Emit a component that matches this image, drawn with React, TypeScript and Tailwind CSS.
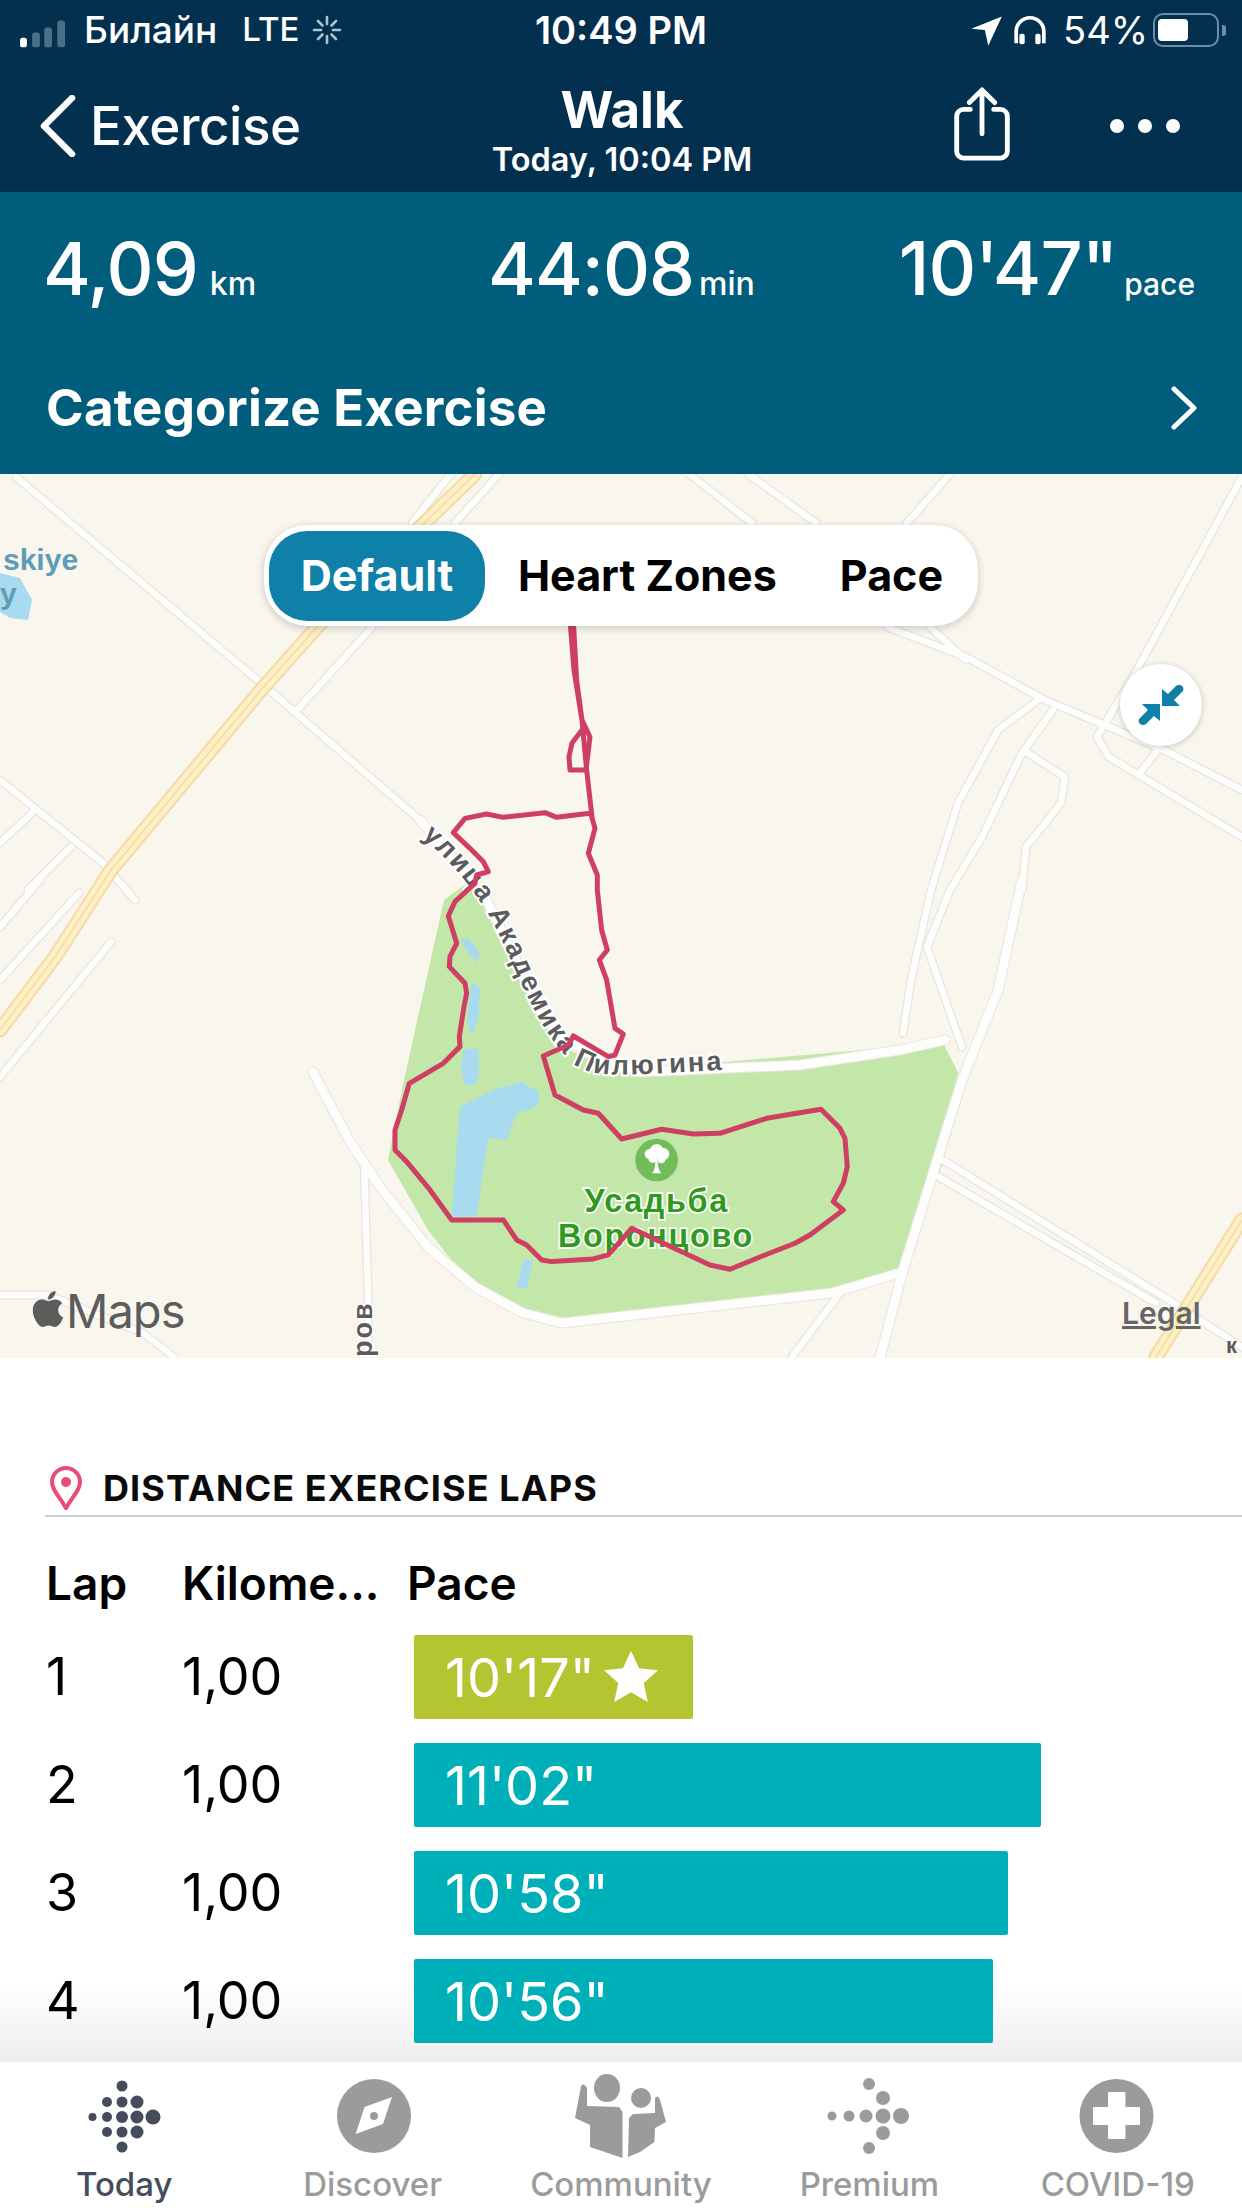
const minorRoads = [
  "M16,477 L261,683 L420,820",
  "M0,780 L103,863 L135,900",
  "M32,813 L0,843",
  "M71,847 L28,890",
  "M40,880 L0,927",
  "M79,893 L0,980",
  "M111,942 L0,1077",
  "M689,474 L752,523",
  "M748,474 L816,523",
  "M950,474 L907,523",
  "M451,474 L412,523",
  "M499,474 L455,523",
  "M372,627 L297,710",
  "M887,627 L966,657 L1045,700 L1164,750 L1242,790",
  "M930,627 L966,660",
  "M1242,477 L1133,677 L1097,737 L1109,757 L1242,837",
  "M1140,773 L1160,747",
  "M1038,700 L998,730 L958,803 L931,890 L911,980 L903,1033",
  "M1053,710 L1022,753 L982,837 L950,890 L927,947 L962,1047",
  "M1026,752 L1065,777 L1061,803 L1026,847 L1022,890",
  "M364,1160 L368,1293 L368,1360",
  "M943,1160 L1164,1297 L1242,1347",
  "M939,1177 L1156,1303",
  "M840,1293 L792,1357",
  "M0,1295 L48,1295 L143,1333 L174,1357",
];

const majorRoads = [
  "M420,820 L483,893 L540,1010 Q570,1055 640,1072 L800,1065 L900,1050 L945,1040",
  "M313,1072 L349,1140 L380,1187 L428,1247 L475,1287 L523,1313 L562,1323 L832,1293 L903,1272",
  "M1022,880 L998,990 L962,1080 L903,1270 L880,1358",
];

const highways = [
  "M475,474 L317,627 L261,690 L111,870 L55,957 L0,1030",
  "M1242,1220 L1156,1357",
];

const route =
  "M640,-480 L650,-300 L666,-180 L680,-30 L696,110 M630,-480 L642,-330 L666,-180 L690,-129 L678,-30 L630,-30 L627,-69 L636,-111 L666,-150 M690,100 L590,112 L555,98 L430,112 L380,102 L315,115 L280,158 L330,205 L370,245 L385,275 L350,285 L345,310 L285,365 L265,408 L290,490 L270,530 L268,560 L315,610 L320,640 L312,680 L298,770 L300,800 L250,850 L148,910 L125,990 L105,1050 L105,1110 L140,1145 L210,1230 L275,1320 L430,1320 L470,1380 L500,1395 L545,1440 L575,1445 L700,1437 L745,1425 L815,1345 L1050,1455 L1110,1468 L1215,1425 L1305,1390 L1350,1365 L1450,1290 L1420,1265 L1450,1210 L1462,1160 L1455,1075 L1440,1045 L1383,988 L1220,1015 L1080,1060 L1000,1062 L905,1048 L785,1077 L715,1000 L670,990 L585,945 L550,828 L625,795 L640,768 L745,830 L765,825 L790,762 L765,745 L740,600 L718,540 L742,510 L725,450 L712,330 L712,285 L685,220 L705,145 L695,110";

function MapLayer() {
  return (
    <svg viewBox="0 474 1242 884" className="block h-full w-full">
      <path d="M467,883 L444,900 L404,1080 L388,1160 L428,1230 L467,1280 L515,1310 L562,1320 L832,1293 L903,1270 L943,1163 L962,1080 L943,1043 L713,1063 L618,1073 L554,1043 L483,893 Z" fill="#c3e7a9" />
      <path d="M0,573 L20,578 L32,600 L28,620 L10,618 L0,612 Z" fill="#a8daf0" />
      <g fill="none" strokeLinecap="round" strokeLinejoin="round">
        {minorRoads.map((d) => (
          <path key={d + "a"} d={d} stroke="#e8e5dd" strokeWidth="9" />
        ))}
        {majorRoads.map((d) => (
          <path key={d + "e"} d={d} stroke="#e8e5dd" strokeWidth="11" />
        ))}
        {minorRoads.map((d) => (
          <path key={d + "b"} d={d} stroke="#fdfdfb" strokeWidth="6.5" />
        ))}
        {majorRoads.map((d) => (
          <path key={d + "f"} d={d} stroke="#fdfdfb" strokeWidth="9" />
        ))}
        {highways.map((d) => (
          <path key={d + "c"} d={d} stroke="#f5d9a4" strokeWidth="15" />
        ))}
        {highways.map((d) => (
          <path key={d + "d"} d={d} stroke="#fdf0c4" strokeWidth="11" />
        ))}
        {highways.map((d) => (
          <path key={d + "g"} d={d} stroke="#f5d9a4" strokeWidth="1.5" />
        ))}
      </g>
      <g transform="translate(360 780) scale(0.3333)">
        <g fill="#a8daf0">
          <path d="M300,980 L400,930 L480,905 L530,930 L540,960 L520,985 L470,1000 L440,1080 L385,1075 L370,1170 L350,1310 L275,1310 L290,1100 Z" />
          <path d="M300,480 L325,475 L360,520 L350,550 L320,510 Z" />
          <path d="M335,610 L360,620 L355,720 L335,765 L320,720 Z" />
          <path d="M310,810 L355,805 L358,880 L345,915 L315,915 L303,860 Z" />
          <path d="M490,1440 L520,1440 L500,1525 L470,1525 Z" />
        </g>
        <path id="street" d="M185,170 C290,260 360,350 410,450 C480,590 530,750 640,850 C700,895 760,888 1120,868" fill="none" />
        <text className="font-['Liberation_Sans',sans-serif] text-[82px] font-bold" fill="#5b5b5b" stroke="#ffffff" strokeWidth="12" paintOrder="stroke" letterSpacing="6">
          <textPath href="#street">улица Академика Пилюгина</textPath>
        </text>
        <circle cx="890" cy="1140" r="64" fill="#72bd5a" />
        <path d="M876,1180 Q888,1170 886,1125 L892,1125 Q892,1170 904,1180 Z" fill="#ffffff" />
        <g fill="#ffffff">
          <circle cx="890" cy="1112" r="20" />
          <circle cx="870" cy="1122" r="16" />
          <circle cx="910" cy="1122" r="18" />
          <circle cx="878" cy="1136" r="12" />
          <circle cx="904" cy="1138" r="12" />
        </g>
        <g className="font-['Liberation_Sans',sans-serif] text-[97px] font-bold" fill="#2f9a1e" stroke="#ffffff" strokeWidth="10" paintOrder="stroke" textAnchor="middle" letterSpacing="5">
          <text x="890" y="1297">Усадьба</text>
          <text x="888" y="1402">Воронцово</text>
        </g>
        <path d={route} fill="none" stroke="#cf3f63" strokeWidth="15" strokeLinejoin="round" strokeLinecap="round" />
      </g>
      <g className="font-['Liberation_Sans',sans-serif] font-bold">
        <text x="3" y="570" fill="#5e9cb8" fontSize="30">skiye</text>
        <text x="0" y="604" fill="#5e9cb8" fontSize="30">y</text>
        <text transform="translate(372 1357) rotate(-90)" fill="#5b5b5b" stroke="#ffffff" strokeWidth="3" paintOrder="stroke" fontSize="27" letterSpacing="2">ров</text>
        <text x="1226" y="1353" fill="#5b5b5b" fontSize="22">к</text>
      </g>
    </svg>
  );
}

function TabIcon({ children, viewBox }: { children: React.ReactNode; viewBox: string }) {
  return (
    <svg viewBox={viewBox} className="h-[92px] w-[100px]">
      {children}
    </svg>
  );
}

const laps = [
  { lap: "1", km: "1,00", pace: "10'17\"", bar: "w-[279px] bg-[#b3c632]", best: true },
  { lap: "2", km: "1,00", pace: "11'02\"", bar: "w-[627px] bg-[#00b0b9]", best: false },
  { lap: "3", km: "1,00", pace: "10'58\"", bar: "w-[594px] bg-[#00b0b9]", best: false },
  { lap: "4", km: "1,00", pace: "10'56\"", bar: "w-[579px] bg-[#00b0b9]", best: false },
];

export default function App() {
  return (
    <div className="flex h-[2208px] w-[1242px] flex-col overflow-hidden bg-white font-[Inter,sans-serif]">
      {/* status bar */}
      <div className="flex h-[60px] items-center bg-[#03304e] text-white">
        <div className="flex w-[534px] items-center">
          <svg viewBox="0 0 60 40" className="ml-[20px] h-[40px] w-[52px]">
            <rect x="0" y="29" width="8" height="11" rx="3" fill="#ffffff" />
            <rect x="14" y="23" width="9" height="17" rx="3" fill="#4a7088" />
            <rect x="28" y="17" width="9" height="23" rx="3" fill="#4a7088" />
            <rect x="43" y="9" width="9" height="31" rx="3" fill="#4a7088" />
          </svg>
          <span className="ml-[12px] text-[37px] font-medium">Билайн</span>
          <span className="ml-[25px] text-[33px] font-medium">LTE</span>
          <svg viewBox="0 0 30 30" className="ml-[13px] h-[30px] w-[30px]" stroke="#a9c3d1" strokeWidth="2.6" strokeLinecap="round">
            <path d="M15 2v7M15 21v7M2 15h7M21 15h7M6 6l4.5 4.5M19.5 19.5L24 24M24 6l-4.5 4.5M10.5 19.5L6 24" />
          </svg>
        </div>
        <span className="w-[174px] text-center text-[38px] font-semibold whitespace-nowrap">10:49 PM</span>
        <div className="flex flex-1 items-center justify-end pr-[16px]">
          <svg viewBox="0 0 30 30" className="h-[34px] w-[34px]" fill="#ffffff">
            <path d="M2 14 L29 3 L17 29 L14 15 Z" />
          </svg>
          <svg viewBox="0 0 32 28" className="ml-[10px] h-[31px] w-[34px]" fill="none" stroke="#ffffff" strokeWidth="3.5">
            <path d="M3 26V15a13 13 0 0 1 26 0v11" />
            <rect x="6" y="17" width="5" height="10" rx="2" fill="#ffffff" stroke="none" />
            <rect x="21" y="17" width="5" height="10" rx="2" fill="#ffffff" stroke="none" />
          </svg>
          <span className="ml-[16px] text-[38px] font-normal">54%</span>
          <div className="ml-[5px] flex h-[34px] w-[66px] items-center rounded-[10px] border-[2.5px] border-[#6d8ea4] p-[3px]">
            <div className="h-[22px] w-[30px] rounded-[4px] bg-white" />
          </div>
          <div className="ml-[3px] h-[11px] w-[4px] rounded-r-[3px] bg-[#6d8ea4]" />
        </div>
      </div>

      {/* nav */}
      <div className="flex h-[132px] items-center bg-[#03304e] text-white">
        <div className="flex w-[440px] items-center pl-[40px]">
          <svg viewBox="0 0 36 62" className="h-[62px] w-[36px]" fill="none" stroke="#ffffff" strokeWidth="6.5" strokeLinecap="round" strokeLinejoin="round">
            <path d="M32 3 L4 31 L32 59" />
          </svg>
          <span className="ml-[14px] text-[53px] leading-none font-medium tracking-[-0.5px]">Exercise</span>
        </div>
        <div className="flex w-[364px] flex-col items-center pt-[5px]">
          <span className="text-[51px] leading-[58px] font-bold">Walk</span>
          <span className="mt-[4px] text-[32.5px] leading-[34px] font-semibold">Today, 10:04 PM</span>
        </div>
        <div className="flex flex-1 items-center justify-end pr-[62px]">
          <svg viewBox="0 0 60 76" className="mr-[98px] mb-[4px] h-[74px] w-[60px]" fill="none" stroke="#ffffff" strokeWidth="5" strokeLinecap="round" strokeLinejoin="round">
            <path d="M18 23 H11 a7 7 0 0 0 -7 7 V66 a7 7 0 0 0 7 7 H49 a7 7 0 0 0 7 -7 V30 a7 7 0 0 0 -7 -7 H42" />
            <path d="M30 3 V48 M17 16 L30 3 L43 16" />
          </svg>
          <div className="flex gap-[14px]">
            <div className="h-[14px] w-[14px] rounded-full bg-white" />
            <div className="h-[14px] w-[14px] rounded-full bg-white" />
            <div className="h-[14px] w-[14px] rounded-full bg-white" />
          </div>
        </div>
      </div>

      {/* stats */}
      <div className="flex h-[282px] flex-col bg-[#005d7b] pl-[43px] pr-[44px] text-white">
        <div className="mt-[21px] flex h-[80px] items-baseline whitespace-nowrap">
          <span className="text-[73px] font-medium tracking-[-1px]">4,09</span>
          <span className="ml-[12px] text-[32px] font-medium">km</span>
          <span className="ml-[232px] text-[73px] font-medium tracking-[-1px]">44:08</span>
          <span className="ml-[5px] text-[32px] font-medium">min</span>
          <span className="ml-[144px] text-[74px] font-medium tracking-[-1px]">10'47"</span>
          <span className="ml-[7px] text-[30px] font-medium">pace</span>
        </div>
        <div className="mt-[85px] flex items-center justify-between">
          <span className="pl-[3px] text-[51px] leading-[60px] font-bold tracking-[0.2px]">Categorize Exercise</span>
          <svg viewBox="0 0 28 44" className="h-[44px] w-[28px]" fill="none" stroke="#ffffff" strokeWidth="5" strokeLinecap="round" strokeLinejoin="round">
            <path d="M4 3 L24 22 L4 41" />
          </svg>
        </div>
      </div>

      {/* map */}
      <div className="relative h-[884px] overflow-hidden bg-[#f9f6ee]">
        <MapLayer />
        <div className="absolute left-[264px] top-[51px] flex h-[101px] w-[714px] items-center rounded-[44px] bg-white pl-[5px] shadow-[0_2px_8px_rgba(0,0,0,0.2)]">
          <div className="flex h-[90px] w-[216px] items-center justify-center rounded-[38px] bg-[#0f80a8] text-[43px] font-bold text-white">Default</div>
          <span className="ml-[33px] text-[43px] font-bold text-black">Heart Zones</span>
          <span className="ml-[63px] text-[43px] font-bold text-black">Pace</span>
        </div>
        <div className="absolute left-[1120px] top-[190px] flex h-[82px] w-[82px] items-center justify-center rounded-full bg-white shadow-[0_1px_6px_rgba(0,0,0,0.2)]">
          <svg viewBox="0 0 46 46" className="h-[46px] w-[46px]" fill="#0f80a8">
            <path d="M41 3 a4 4 0 0 1 3 7 L36 18 L42 24 L24 24 L24 7 L30 12 L38 4 a4 4 0 0 1 3 -1 Z" />
            <path d="M5 43 a4 4 0 0 1 -3 -7 L10 28 L4 22 L22 22 L22 39 L16 34 L8 42 a4 4 0 0 1 -3 1 Z" />
          </svg>
        </div>
        <div className="absolute left-[30px] top-[812px] flex items-center text-[#5c5c5c]">
          <svg viewBox="3 3 17 19" className="h-[48px] w-[34px]" fill="#5c5c5c">
            <path d="M17.05 20.28c-.98.95-2.05.8-3.08.35-1.09-.46-2.09-.48-3.24 0-1.44.62-2.2.44-3.06-.35C2.79 15.25 3.51 7.59 9.05 7.31c1.35.07 2.29.74 3.08.8 1.18-.24 2.31-.93 3.57-.84 1.51.12 2.65.72 3.4 1.8-3.12 1.87-2.38 5.98.48 7.13-.57 1.5-1.31 2.99-2.54 4.09zM12.03 7.25c-.15-2.23 1.66-4.07 3.74-4.25.29 2.58-2.34 4.5-3.74 4.25z" />
          </svg>
          <span className="ml-[2px] text-[47px] leading-none tracking-[-1px]">Maps</span>
        </div>
        <span className="absolute left-[1122px] top-[817px] text-[30px] font-semibold text-[#666666] underline">Legal</span>
      </div>

      {/* laps */}
      <div className="relative flex-1 overflow-hidden bg-white">
        <div className="absolute inset-x-0 bottom-0 h-[80px] bg-linear-to-b from-white to-[#eeeeee]" />
        <div className="relative ml-[45px] mt-[108px] flex h-[51px] items-start border-b-[2px] border-[#cfcfcf]">
          <svg viewBox="0 0 34 44" className="ml-[4px] h-[44px] w-[34px]" fill="none" stroke="#ea4c78" strokeWidth="4">
            <path d="M17 42 C10 30 3 24 3 16 a14 14 0 0 1 28 0 C31 24 24 30 17 42 Z" />
            <circle cx="17" cy="16" r="5" fill="#ea4c78" stroke="none" />
          </svg>
          <span className="ml-[20px] text-[36px] leading-[44px] font-bold tracking-[1.1px] text-[#0b0b0b]">DISTANCE EXERCISE LAPS</span>
        </div>
        <div className="relative ml-[46px] mt-[32px] grid h-[50px] grid-cols-[136px_225px_1fr] items-center text-[46px] font-semibold text-black">
          <span>Lap</span>
          <span>Kilome...</span>
          <span>Pace</span>
        </div>
        <div className="relative ml-[46px] mt-[24px] flex flex-col">
          {laps.map((row) => (
            <div key={row.lap} className="grid h-[108px] grid-cols-[136px_232px_1fr] items-center text-[52px] text-black">
              <span>{row.lap}</span>
              <span>{row.km}</span>
              <div className={`flex h-[84px] items-center rounded-[2px] pl-[31px] text-[54px] text-white ${row.bar}`}>
                <span>{row.pace}</span>
                {row.best && (
                  <svg viewBox="0 0 24 24" className="ml-[6px] h-[60px] w-[60px]" fill="#ffffff">
                    <path d="M12 1.5 L15.2 8.5 L22.8 9.3 L17.1 14.4 L18.7 22 L12 18.1 L5.3 22 L6.9 14.4 L1.2 9.3 L8.8 8.5 Z" />
                  </svg>
                )}
              </div>
            </div>
          ))}
        </div>
      </div>

      {/* tabs */}
      <div className="grid h-[146px] grid-cols-5 bg-white pt-[8px] text-[33px] font-medium text-[#9b9b9b]">
        <div className="flex flex-col items-center text-[#454c5c]">
          <TabIcon viewBox="74 2070 100 92">
            <g fill="#454c5c">
              <circle cx="122" cy="2086" r="5.5" />
              <circle cx="107" cy="2102" r="5" /><circle cx="122" cy="2102" r="5.5" /><circle cx="137" cy="2102" r="6.5" />
              <circle cx="92.5" cy="2117" r="4" /><circle cx="107" cy="2117" r="5" /><circle cx="122" cy="2117" r="6" /><circle cx="137" cy="2117" r="6.5" /><circle cx="153" cy="2117" r="7.5" />
              <circle cx="107" cy="2132" r="5" /><circle cx="122" cy="2132" r="5.5" /><circle cx="137" cy="2132" r="6.5" />
              <circle cx="122" cy="2147" r="5.5" />
            </g>
          </TabIcon>
          <span className="leading-[44px]">Today</span>
        </div>
        <div className="flex flex-col items-center">
          <TabIcon viewBox="322 2070 100 92">
            <circle cx="373" cy="2116" r="37" fill="#9b9b9b" />
            <path d="M391,2097 L363.5,2107 L354.7,2134 L382,2124 Z" fill="#ffffff" />
            <circle cx="373" cy="2116" r="4" fill="#9b9b9b" />
          </TabIcon>
          <span className="leading-[44px]">Discover</span>
        </div>
        <div className="flex flex-col items-center">
          <TabIcon viewBox="571 2070 100 92">
            <g fill="#9b9b9b">
              <ellipse cx="607" cy="2088" rx="13" ry="14" />
              <circle cx="641" cy="2098" r="10" />
              <path d="M581,2086 L575,2118 L590,2125 L590,2147 L622.5,2158 L622.5,2112 L619,2107 L587,2106 L587,2088 Q584,2082 581,2086 Z" />
              <path d="M628,2157 L629,2118 L633,2114 L655,2113 L655,2098 Q658,2094 660,2100 L666,2122 L655,2128 L654.5,2142 L640,2152 Z" />
            </g>
          </TabIcon>
          <span className="leading-[44px]">Community</span>
        </div>
        <div className="flex flex-col items-center">
          <TabIcon viewBox="819 2070 100 92">
            <g fill="#9b9b9b">
              <circle cx="869" cy="2084" r="6" /><circle cx="883" cy="2098" r="7" />
              <circle cx="832" cy="2116" r="4.5" /><circle cx="849" cy="2116" r="5.5" /><circle cx="866" cy="2116" r="6.5" /><circle cx="883" cy="2116" r="7.5" /><circle cx="901" cy="2116" r="8" />
              <circle cx="883" cy="2133" r="7" /><circle cx="869" cy="2148" r="6" />
            </g>
          </TabIcon>
          <span className="leading-[44px]">Premium</span>
        </div>
        <div className="flex flex-col items-center">
          <TabIcon viewBox="1068 2070 100 92">
            <circle cx="1116.5" cy="2116" r="37" fill="#9b9b9b" />
            <path d="M1109,2093 H1124.5 V2108 H1139 V2124 H1124.5 V2138 H1109 V2124 H1094 V2108 H1109 Z" fill="#ffffff" stroke="#ffffff" strokeWidth="2" strokeLinejoin="round" />
          </TabIcon>
          <span className="leading-[44px]">COVID-19</span>
        </div>
      </div>
    </div>
  );
}
